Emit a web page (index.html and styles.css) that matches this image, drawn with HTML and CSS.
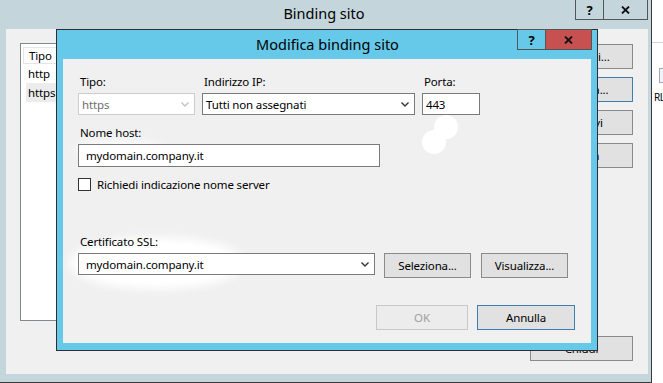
FILE: index.html
```html
<!DOCTYPE html>
<html lang="it">
<head>
<meta charset="utf-8">
<title>Modifica binding sito</title>
<link rel="stylesheet" href="styles.css">
</head>
<body>
<div class="desktop">
  <div class="outer">
    <div class="titlebar outer-title">
      <span class="title-text">Binding sito</span>
      <div class="caps outer-caps">
        <div class="cap cap-help">?</div>
        <div class="cap cap-close">
          <svg width="9" height="8" viewBox="0 0 9 8"><path d="M1 0.5 L8 7.5 M8 0.5 L1 7.5" stroke="#111" stroke-width="1.8" fill="none"/></svg>
        </div>
      </div>
    </div>
    <div class="outer-client">
      <div class="listbox">
        <div class="lb-header"><div class="lb-hcell">Tipo</div></div>
        <div class="lb-row">http</div>
        <div class="lb-row sel">https</div>
      </div>
      <div class="side-btns">
        <div class="btn side">Aggiungi...</div>
        <div class="btn side focus">Modifica...</div>
        <div class="btn side">Rimuovi</div>
        <div class="btn side">Sfoglia</div>
        <div class="btn side close-btn">Chiudi</div>
      </div>
    </div>
  </div>
  <div class="bgwin">
    <div class="bg-line"></div>
    <div class="bg-icon"></div>
    <div class="bg-text">RL</div>
  </div>

  <div class="dialog">
    <div class="titlebar dlg-title">
      <span class="title-text">Modifica binding sito</span>
      <div class="caps dlg-caps">
        <div class="cap cap-help">?</div>
        <div class="cap cap-close red">
          <svg width="9" height="8" viewBox="0 0 9 8"><path d="M1 0.5 L8 7.5 M8 0.5 L1 7.5" stroke="#111" stroke-width="1.8" fill="none"/></svg>
        </div>
      </div>
    </div>
    <div class="client">
      <div class="blob blob-a"></div>
      <div class="blob blob-b"></div>
      <div class="blob blob-c"></div>
      <div class="blob blob-d"></div>

      <div class="row1">
        <div class="field w-tipo">
          <div class="lbl">Tipo:</div>
          <div class="ctl select disabled"><span>https</span>
            <svg class="chev" width="8" height="5" viewBox="0 0 8 5"><path d="M0.5 0.5 L4 4 L7.5 0.5" stroke="#c2c2c2" stroke-width="1.4" fill="none"/></svg>
          </div>
        </div>
        <div class="field w-ip">
          <div class="lbl">Indirizzo IP:</div>
          <div class="ctl select"><span>Tutti non assegnati</span>
            <svg class="chev" width="8" height="5" viewBox="0 0 8 5"><path d="M0.5 0.5 L4 4 L7.5 0.5" stroke="#333" stroke-width="1.4" fill="none"/></svg>
          </div>
        </div>
        <div class="field w-porta">
          <div class="lbl">Porta:</div>
          <div class="ctl">443</div>
        </div>
      </div>

      <div class="field host-field">
        <div class="lbl">Nome host:</div>
        <div class="ctl host">mydomain.company.it</div>
      </div>

      <div class="check-row">
        <span class="checkbox"></span>
        <span class="check-label">Richiedi indicazione nome server</span>
      </div>

      <div class="lbl cert-lbl">Certificato SSL:</div>
      <div class="ssl-row">
        <div class="ctl select ssl"><span>mydomain.company.it</span>
          <svg class="chev" width="8" height="5" viewBox="0 0 8 5"><path d="M0.5 0.5 L4 4 L7.5 0.5" stroke="#333" stroke-width="1.4" fill="none"/></svg>
        </div>
        <div class="btn b-sel">Seleziona...</div>
        <div class="btn b-vis">Visualizza...</div>
      </div>

      <div class="bottom-row">
        <div class="btn b-ok disabled-btn">OK</div>
        <div class="btn b-cancel focus">Annulla</div>
      </div>
    </div>
  </div>
</div>
</body>
</html>
```

FILE: styles.css
```css
* { box-sizing: border-box; }
html, body { margin: 0; padding: 0; }
body {
  width: 663px;
  height: 383px;
  overflow: hidden;
  font-family: "Noto Sans", "Open Sans", sans-serif;
  font-size: 11.5px;
  letter-spacing: -0.15px;
  color: #000;
  background: #fff;
}
.desktop {
  position: relative;
  display: flex;
  width: 663px;
  height: 383px;
}

/* ---------- outer window ---------- */
.outer {
  width: 652px;
  height: 383px;
  background: #c4d6dc;
  border-right: 1px solid #3a3a3a;
  border-bottom: 1px solid #3a3a3a;
  padding: 0 3px 8px 6px;
  display: flex;
  flex-direction: column;
}
.titlebar {
  display: grid;
  grid-template-columns: 1fr auto 1fr;
  align-items: start;
}
.title-text {
  grid-column: 2;
  font-size: 14.5px;
  letter-spacing: 0;
  white-space: nowrap;
}
.caps {
  grid-column: 3;
  justify-self: end;
  display: flex;
}
.outer-title {
  height: 29px;
  margin-left: -6px;
}
.outer-title .title-text { line-height: 29px; margin-top: -1px; }
.cap {
  display: flex;
  align-items: center;
  justify-content: center;
  border: 1px solid #555;
  border-top: none;
  font-weight: bold;
  font-size: 13px;
  letter-spacing: 0;
}
.outer-caps .cap { height: 20px; }
.outer-caps .cap-help { width: 28px; border-right: none; }
.outer-caps .cap-close { width: 45px; }

.outer-client {
  flex: 1;
  background: #f0f0f0;
  display: flex;
  padding: 14px 15px 13px 14px;
  gap: 10px;
}
.listbox {
  flex: 1;
  height: 278px;
  background: #fff;
  border: 1px solid #828790;
  padding: 3px 2px;
}
.lb-header {
  height: 17px;
  border-bottom: 1px solid #e5e5e5;
  display: flex;
}
.lb-hcell {
  width: 110px;
  border: 1px solid #e5e5e5;
  border-bottom: none;
  padding-left: 5px;
  line-height: 15px;
}
.lb-row {
  height: 19px;
  line-height: 19px;
  padding-left: 2px;
  margin-left: 3px;
}
.lb-row.sel { background: #ececec; }
.side-btns {
  width: 103px;
  display: flex;
  flex-direction: column;
  gap: 8px;
  padding-top: 1px;
}
.close-btn { margin-top: auto; }

.btn {
  height: 25px;
  background: #e1e1e1;
  border: 1px solid #8a8a8a;
  display: flex;
  align-items: center;
  justify-content: center;
  white-space: nowrap;
  position: relative;
}
.btn.focus { border-color: #3c7fb1; }
.btn.disabled-btn { border-color: #c8c8c8; color: #a0a0a0; background: #ececec; }

/* ---------- background window strip ---------- */
.bgwin {
  flex: 1;
  background: #fff;
  overflow: hidden;
  display: flex;
  flex-direction: column;
}
.bg-line {
  height: 1px;
  background: #d4d4d4;
  margin-top: 42px;
}
.bg-icon {
  margin-top: 25px;
  margin-left: 7px;
  width: 10px;
  height: 15px;
  border: 1px solid #a8a8a8;
  background: #eef4fb;
}
.bg-text {
  margin-top: 7px;
  margin-left: 2px;
  font-size: 10px;
  line-height: 14px;
  letter-spacing: -0.5px;
}

/* ---------- dialog ---------- */
.dialog {
  position: absolute;
  left: 56px;
  top: 29px;
  width: 542px;
  height: 322px;
  background: #66c9e9;
  border: 1px solid #2e2e2e;
  padding: 0 6px 7px 6px;
  display: flex;
  flex-direction: column;
  z-index: 2;
}
.dlg-title {
  height: 29px;
  margin-right: -1px;
}
.dlg-title .title-text { line-height: 28px; }
.dlg-caps { margin-top: -1px; }
.dlg-caps .cap { height: 21px; border-top: 1px solid #555; }
.dlg-caps .cap-help { width: 28px; border-right: none; }
.dlg-caps .cap-close { width: 47px; }
.cap.red { background: #c75050; }

.client {
  flex: 1;
  background: #f0f0f0;
  padding: 15px 0 0 15px;
  display: flex;
  flex-direction: column;
  position: relative;
}
.blob {
  position: absolute;
  background: #fff;
  border-radius: 50%;
}
.blob-a { left: 371px; top: 56px; width: 24px; height: 24px; }
.blob-b { left: 359px; top: 71px; width: 24px; height: 24px; }
.blob-c { left: 6px; top: 178px; width: 175px; height: 52px; filter: blur(5px); }
.blob-d { left: 12px; top: 82px; width: 90px; height: 16px; filter: blur(4px); opacity: 0.8; }

.row1 { display: flex; gap: 7px; }
.field { display: flex; flex-direction: column; position: relative; }
.lbl {
  height: 16px;
  line-height: 16px;
  padding-left: 2px;
  margin-bottom: 3px;
  position: relative;
  white-space: nowrap;
}
.ctl {
  height: 22px;
  border: 1px solid #7a7a7a;
  background: #fff;
  display: flex;
  align-items: center;
  padding: 0 3px;
  position: relative;
  white-space: nowrap;
}
.select span { flex: 1; }
.chev { margin-right: 2px; }
.ctl.disabled { border-color: #cccccc; color: #6d6d6d; }
.w-tipo { width: 117px; }
.w-ip { width: 213px; }
.w-porta { width: 58px; }

.host-field { margin-top: 10px; }
.ctl.host { width: 302px; height: 23px; padding-left: 7px; }

.check-row {
  margin-top: 9px;
  height: 16px;
  display: flex;
  align-items: center;
  gap: 6px;
  position: relative;
}
.checkbox {
  width: 13px;
  height: 13px;
  border: 1px solid #333;
  background: #fff;
}

.cert-lbl { margin-top: 42px; }
.ssl-row { display: flex; align-items: flex-start; }
.ctl.ssl { width: 297px; padding-left: 7px; }
.b-sel { width: 87px; margin-left: 9px; }
.b-vis { width: 87px; margin-left: 10px; }

.bottom-row {
  margin-top: 27px;
  display: flex;
  justify-content: flex-end;
  gap: 9px;
  padding-right: 16px;
}
.b-ok { width: 92px; }
.b-cancel { width: 98px; }
```
